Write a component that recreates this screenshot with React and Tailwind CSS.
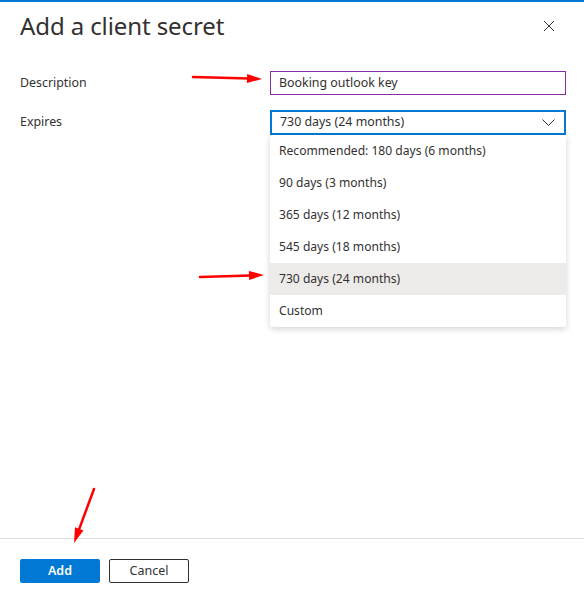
import React from 'react'

const options = [
  'Recommended: 180 days (6 months)',
  '90 days (3 months)',
  '365 days (12 months)',
  '545 days (18 months)',
  '730 days (24 months)',
  'Custom',
]

const Arrow = ({ x1, y1, x2, y2 }) => {
  const dx = x2 - x1
  const dy = y2 - y1
  const len = Math.sqrt(dx * dx + dy * dy)
  const ux = dx / len
  const uy = dy / len
  const hl = 15
  const hw = 4.5
  const bx = x2 - ux * hl
  const by = y2 - uy * hl
  const p1 = `${bx - uy * hw},${by + ux * hw}`
  const p2 = `${bx + uy * hw},${by - ux * hw}`
  return (
    <g>
      <line x1={x1} y1={y1} x2={bx + ux * 2} y2={by + uy * 2} stroke="#ff0000" strokeWidth="2.5" strokeLinecap="round" />
      <polygon points={`${x2},${y2} ${p1} ${p2}`} fill="#ff0000" />
    </g>
  )
}

const App = () => {
  return (
    <div className="relative w-[584px] h-[602px] bg-white text-[#323130] flex flex-col font-['Noto_Sans',sans-serif]">
      <div className="h-[2px] bg-[#0078d4]" />

      <div className="flex items-center justify-between pl-5 pr-[29px] h-[48px]">
        <h1 className="text-[24px] leading-none text-[#323130] tracking-[-0.1px] -mt-[1px]">Add a client secret</h1>
        <svg width="12" height="12" viewBox="0 0 12 12">
          <path d="M1 1 L11 11 M11 1 L1 11" stroke="#323130" strokeWidth="1" />
        </svg>
      </div>

      <div className="flex flex-col pl-5 pr-[18px] pt-[21px] flex-1">
        <div className="flex items-center h-[24px]">
          <label className="w-[250px] shrink-0 text-[12.4px]">Description</label>
          <div className="w-[296px] shrink-0 h-[24px] border border-[#8a2da5] flex items-center px-2 text-[12.4px]">
            Booking outlook key
          </div>
        </div>

        <div className="flex items-start mt-[15px]">
          <label className="w-[250px] shrink-0 text-[12.4px] h-[25px] flex items-center">Expires</label>
          <div className="w-[296px] shrink-0 flex flex-col">
            <div className="h-[25px] border-2 border-[#0078d4] flex items-center justify-between pl-2 pr-[9px] text-[12.4px]">
              <span>730 days (24 months)</span>
              <svg width="13" height="7" viewBox="0 0 13 7">
                <path d="M0.5 0.5 L6.5 6.5 L12.5 0.5" fill="none" stroke="#323130" strokeWidth="1" />
              </svg>
            </div>
            <div className="flex flex-col bg-white shadow-[0_2px_6px_rgba(0,0,0,0.18)] rounded-b-[2px]">
              {options.map((o) => (
                <div
                  key={o}
                  className={`h-[32px] flex items-center pl-[9px] pr-2 text-[12.1px] ${o === '730 days (24 months)' ? 'bg-[#edebe9]' : ''}`}
                >
                  {o}
                </div>
              ))}
            </div>
          </div>
        </div>
      </div>

      <div className="border-t border-[#e1dfdd] h-[64px] flex items-start gap-[9px] px-5 pt-[20px]">
        <button className="w-[80px] h-[24px] bg-[#0078d4] text-white text-[12.5px] font-semibold rounded-[2px]">
          Add
        </button>
        <button className="w-[80px] h-[24px] border border-[#323130] text-[#323130] text-[12.5px] rounded-[2px]">
          Cancel
        </button>
      </div>

      <svg className="absolute inset-0 pointer-events-none" width="584" height="602">
        <Arrow x1={193} y1={77} x2={262} y2={79} />
        <Arrow x1={200} y1={277} x2={264} y2={275} />
        <Arrow x1={94} y1={489} x2={74} y2={543} />
      </svg>
    </div>
  )
}

export default App
